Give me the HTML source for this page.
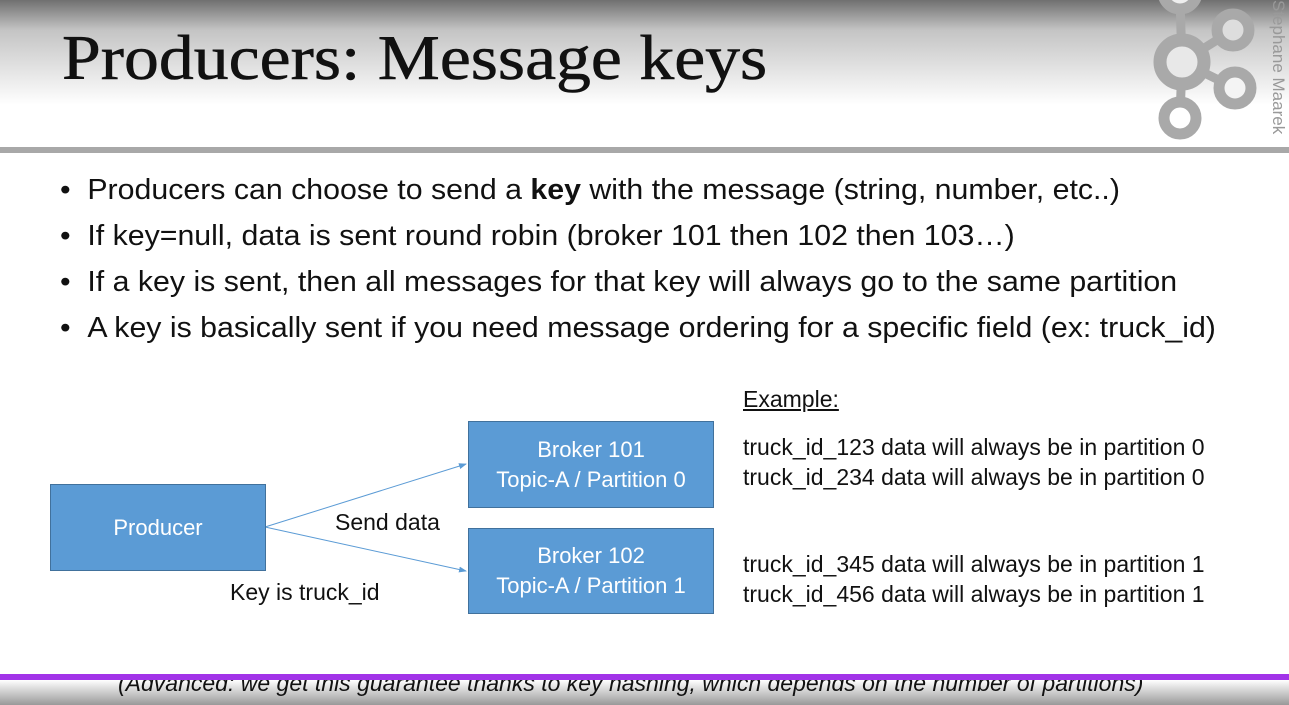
<!DOCTYPE html>
<html><head><style>
body{margin:0;width:1289px;height:705px;overflow:hidden;position:relative;background:#fff;font-family:"Liberation Sans",sans-serif}
.hdr{position:absolute;left:0;top:0;width:1289px;height:147px;background:linear-gradient(#707070 0px,#c4c4c4 30px,#fff 105px,#fff)}
.bar{position:absolute;left:0;top:147px;width:1289px;height:6px;background:#a8a8a8}
h1{position:absolute;left:62px;top:21px;margin:0;font-family:"Liberation Serif",serif;font-weight:normal;font-size:64px;line-height:1.15;color:#111;white-space:nowrap;transform:scaleX(1.09);transform-origin:0 0;-webkit-text-stroke:0.6px #111}
.sig{position:absolute;left:1266px;top:0;transform-origin:0 0;transform:translate(22px,0) rotate(90deg);font-size:17px;color:#999;white-space:nowrap}
ul{position:absolute;left:60px;top:168px;margin:0;padding:0;list-style:none;font-size:29px;color:#111;transform:scaleX(1.045);transform-origin:0 0}
li{height:46px;line-height:44px;white-space:nowrap}
li:before{content:"•";margin-right:16px}
.box{position:absolute;background:#5b9bd5;border:1px solid #41719c;color:#fff;font-size:22px;text-align:center;display:flex;flex-direction:column;justify-content:center;line-height:30px}
.t{position:absolute;font-size:23px;color:#111;white-space:nowrap}
.foot{position:absolute;left:0;top:680px;width:1289px;height:25px;background:linear-gradient(#fff,#999)}
.pb{position:absolute;left:0;top:674px;width:1289px;height:6px;background:#a233e8}
.adv{position:absolute;left:118px;top:670px;font-style:italic;font-size:23px;color:#111;white-space:nowrap}
</style></head><body>
<div class="hdr"></div>
<svg style="position:absolute;left:1130px;top:0" width="140" height="147">
<g stroke="#a9a9a9" stroke-width="9" fill="none">
<line x1="52" y1="62" x2="50" y2="0"/><line x1="52" y1="62" x2="103" y2="30"/><line x1="52" y1="62" x2="105" y2="88"/><line x1="52" y1="62" x2="50" y2="118"/>
</g>
<g stroke="#a9a9a9" fill="#eee">
<circle cx="50" cy="-8" r="17" stroke-width="11"/>
<circle cx="52" cy="62" r="22" stroke-width="13" fill="#e8e8e8"/>
<circle cx="103" cy="30" r="16" stroke-width="11" fill="#ddd"/>
<circle cx="105" cy="88" r="16" stroke-width="11" fill="#f4f4f4"/>
<circle cx="50" cy="118" r="16" stroke-width="11" fill="#fff"/>
</g></svg>
<div class="sig">Stephane Maarek</div>
<div class="bar"></div>
<h1>Producers: Message keys</h1>
<ul>
<li>Producers can choose to send a <b>key</b> with the message (string, number, etc..)</li>
<li>If key=null, data is sent round robin (broker 101 then 102 then 103…)</li>
<li>If a key is sent, then all messages for that key will always go to the same partition</li>
<li>A key is basically sent if you need message ordering for a specific field (ex: truck_id)</li>
</ul>
<svg style="position:absolute;left:0;top:0" width="1289" height="705">
<defs><marker id="a" markerWidth="8" markerHeight="8" refX="7" refY="4" orient="auto"><path d="M0,1 L8,4 L0,7z" fill="#5b9bd5"/></marker></defs>
<line x1="265" y1="527" x2="466" y2="464" stroke="#5b9bd5" stroke-width="1" marker-end="url(#a)"/>
<line x1="265" y1="527" x2="466" y2="571" stroke="#5b9bd5" stroke-width="1" marker-end="url(#a)"/>
</svg>
<div class="box" style="left:50px;top:484px;width:214px;height:85px">Producer</div>
<div class="box" style="left:468px;top:421px;width:244px;height:85px"><div>Broker 101</div><div>Topic-A / Partition 0</div></div>
<div class="box" style="left:468px;top:528px;width:244px;height:84px"><div>Broker 102</div><div>Topic-A / Partition 1</div></div>
<div class="t" style="left:335px;top:509px">Send data</div>
<div class="t" style="left:230px;top:579px">Key is truck_id</div>
<div class="t" style="left:743px;top:386px;text-decoration:underline">Example:</div>
<div class="t" style="left:743px;top:432px;line-height:30px">truck_id_123 data will always be in partition 0<br>truck_id_234 data will always be in partition 0</div>
<div class="t" style="left:743px;top:549px;line-height:30px">truck_id_345 data will always be in partition 1<br>truck_id_456 data will always be in partition 1</div>
<div class="foot"></div>
<div class="adv">(Advanced: we get this guarantee thanks to key hashing, which depends on the number of partitions)</div>
<div class="pb"></div>
</body></html>
